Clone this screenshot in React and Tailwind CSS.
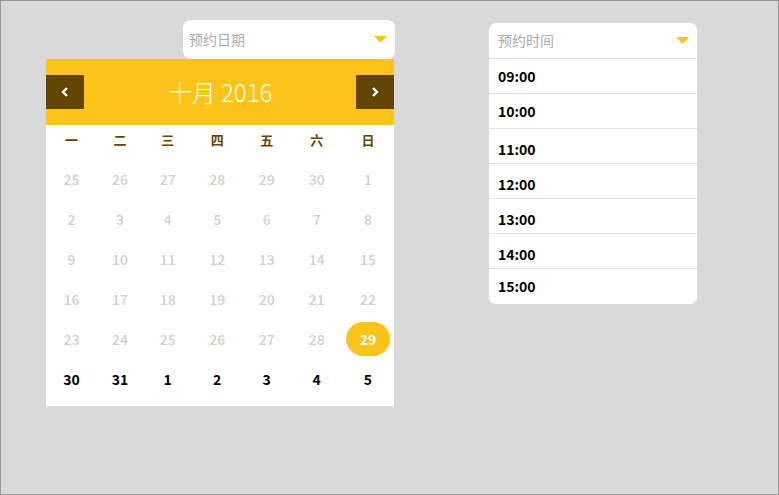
import React from "react";

const weekdays = ["一", "二", "三", "四", "五", "六", "日"];

const rows = [
  [25, 26, 27, 28, 29, 30, 1],
  [2, 3, 4, 5, 6, 7, 8],
  [9, 10, 11, 12, 13, 14, 15],
  [16, 17, 18, 19, 20, 21, 22],
  [23, 24, 25, 26, 27, 28, 29],
  [30, 31, 1, 2, 3, 4, 5],
];

// the reference list is not perfectly even: middle rows sit a little lower
const times = [
  { t: "09:00", pad: "pt-0" },
  { t: "10:00", pad: "pt-0" },
  { t: "11:00", pad: "pt-[6px]" },
  { t: "12:00", pad: "pt-[6px]" },
  { t: "13:00", pad: "pt-[6px]" },
  { t: "14:00", pad: "pt-[6px]" },
  { t: "15:00", pad: "pt-0" },
];

const cols = "grid grid-cols-[51px_46px_49.5px_49.5px_49.5px_50.5px_52px]";

function Caret() {
  return (
    <svg width="13" height="7" viewBox="0 0 13 7">
      <path d="M0 0h13L6.5 7z" fill="#fcc419" />
    </svg>
  );
}

function Chevron({ dir }) {
  return (
    <svg width="8" height="10" viewBox="0 0 8 10">
      <path
        d={dir === "left" ? "M6 1L2 5l4 4" : "M2 1l4 4-4 4"}
        fill="none"
        stroke="#fff"
        strokeWidth="2.4"
      />
    </svg>
  );
}

export default function App() {
  return (
    <div
      className="w-[779px] h-[495px] bg-[#d9d9d9] border border-[#999] relative overflow-hidden"
      style={{ fontFamily: '"Noto Sans CJK SC", "Noto Sans", sans-serif' }}
    >
      <div className="flex items-start pt-[19px]">
        {/* date picker */}
        <div className="ml-[45px] w-[348px] flex flex-col">
          <div className="ml-[137px] w-[212px] h-[39px] bg-white rounded-[8px] flex items-center justify-between pl-[6px] pr-[8px]">
            <span className="text-[14px] text-[#aaa]">预约日期</span>
            <Caret />
          </div>
          <div className="h-[66px] bg-[#fcc419] flex items-center justify-between">
            <button className="w-[38px] h-[34px] bg-[#634400] flex items-center justify-center">
              <Chevron dir="left" />
            </button>
            <span className="text-[24px] font-light text-white leading-none">十月 2016</span>
            <button className="w-[38px] h-[34px] bg-[#634400] flex items-center justify-center">
              <Chevron dir="right" />
            </button>
          </div>
          <div className="bg-white pb-[7px]">
            <div className={`${cols} h-[30px] items-center`}>
              {weekdays.map((w) => (
                <span key={w} className="text-center text-[13px] font-bold text-[#634400]">
                  {w}
                </span>
              ))}
            </div>
            <div className="pt-[4px]">
              {rows.map((row, ri) => (
                <div key={ri} className={`${cols} h-[40px] items-center`}>
                  {row.map((d, di) => {
                    const selected = ri === 4 && di === 6;
                    const current = ri === 5;
                    return (
                      <div key={di} className="flex justify-center">
                        {selected ? (
                          <span className="w-[44px] h-[34px] rounded-full bg-[#fcc419] text-white text-[14px] font-bold flex items-center justify-center">
                            {d}
                          </span>
                        ) : (
                          <span
                            className={
                              current
                                ? "text-[14px] font-bold text-black"
                                : "text-[14px] font-medium text-[#d0d0d0]"
                            }
                          >
                            {d}
                          </span>
                        )}
                      </div>
                    );
                  })}
                </div>
              ))}
            </div>
          </div>
        </div>

        {/* time picker */}
        <div className="ml-[94px] mt-[2px] w-[210px] bg-white border border-[#ddd] rounded-[8px] overflow-hidden">
          <div className="h-[36px] flex items-center justify-between pl-[9px] pr-[8px] border-b border-[#e2e2e2]">
            <span className="text-[14px] text-[#aaa]">预约时间</span>
            <Caret />
          </div>
          {times.map((row, i) => (
            <div
              key={row.t}
              className={`h-[35px] flex items-center pl-[9px] text-[14px] font-bold text-black ${row.pad} ${
                i < times.length - 1 ? "border-b border-[#e2e2e2]" : ""
              }`}
            >
              {row.t}
            </div>
          ))}
        </div>
      </div>
    </div>
  );
}
